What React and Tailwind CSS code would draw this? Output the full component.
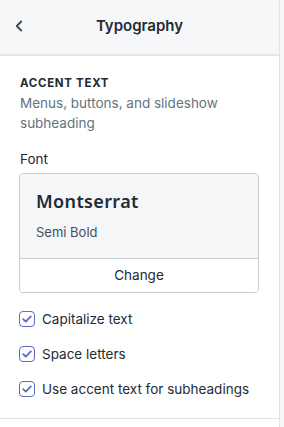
import { ChevronLeft } from 'lucide-react'

const options = ['Capitalize text', 'Space letters', 'Use accent text for subheadings']

function Checkbox() {
    return (
        <span className="flex h-4 w-4 shrink-0 items-center justify-center rounded-[4px] border border-[#5c6ac4] bg-white">
            <svg width="10" height="8" viewBox="0 0 10 8" fill="none">
                <path d="M1.2 4.2 3.8 6.6 8.8 1.4" stroke="#5c6ac4" strokeWidth="1.8" strokeLinecap="round" strokeLinejoin="round" />
            </svg>
        </span>
    )
}

export default function App() {
    return (
        <div className="flex h-[427px] w-[284px] bg-[#f4f6f8] font-['Inter',sans-serif] text-[#212b36]">
            <div className="flex w-[280px] flex-col border-r border-[#dfe3e8] bg-white">
                {/* Header */}
                <div className="relative flex h-[56px] shrink-0 items-center justify-center border-b-2 border-[#e4e6e9] bg-[#f6f7f9] pb-[2px]">
                    <ChevronLeft size={18} strokeWidth={2.4} className="absolute left-[10px] top-[17px] text-[#3e4752]" />
                    <h1 className="text-[15px] font-semibold">Typography</h1>
                </div>

                {/* Accent text section */}
                <div className="border-b border-[#dfe3e8] pb-[19px] pl-[19px] pr-5 pt-[19px]">
                    <h2 className="pl-px text-[11.5px] font-bold uppercase leading-4 tracking-[0.06em]">Accent text</h2>
                    <p className="mt-[2px] pl-px text-[13.5px] leading-5 text-[#637381]">
                        Menus, buttons, and slideshow subheading
                    </p>

                    <p className="mt-4 pl-px text-[13.5px] leading-5">Font</p>

                    <div className="mt-1 overflow-hidden rounded-[4px] border border-[#c4cdd5]">
                        <div className="bg-[#f4f6f8] px-4 pb-4 pt-[15px]">
                            <p className="font-['Noto_Sans',sans-serif] text-[18px] font-semibold leading-6 tracking-[0.02em]">Montserrat</p>
                            <p className="mt-[9px] text-[13px] leading-5 text-[#454f5b]">Semi Bold</p>
                        </div>
                        <button className="flex h-[34px] w-full items-center justify-center border-t border-[#c4cdd5] bg-white text-[13.5px]">
                            Change
                        </button>
                    </div>

                    <div className="mt-4 flex flex-col gap-[15px]">
                        {options.map((label) => (
                            <label key={label} className="flex h-5 items-center gap-[7px] text-[13.5px]">
                                <Checkbox />
                                <span>{label}</span>
                            </label>
                        ))}
                    </div>
                </div>
            </div>
        </div>
    )
}
